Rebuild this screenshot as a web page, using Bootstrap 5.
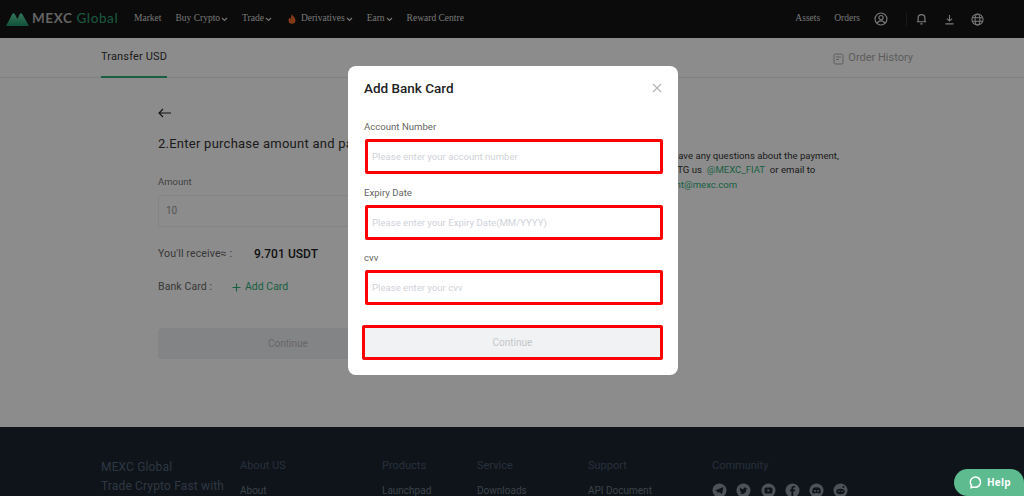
<!DOCTYPE html>
<html lang="en">
<head>
<meta charset="utf-8">
<title>MEXC Global - Add Bank Card</title>
<link href="https://cdn.jsdelivr.net/npm/bootstrap@5.3.0/dist/css/bootstrap.min.css" rel="stylesheet">
<style>
html,body{height:100%;overflow:hidden}
body{font-family:Roboto,"Liberation Sans",sans-serif;background:#fff;color:#333;font-size:11px}
.top-bar{height:38px;background:#141414;padding-left:6px;padding-right:40px;color:#c8c8c8}
.brand-wrap{width:113px}
.brand-txt{font:700 13.5px/1 Lato,Roboto,sans-serif;letter-spacing:.6px;color:#b5b5b5;white-space:nowrap;margin-left:3px}
.brand-txt b{color:#2f9b70;font-weight:500}
.nav-txt{font:9.5px/1 "Liberation Serif",serif;color:#d8d8d8;white-space:nowrap}
.mk-nav{margin-left:15px;gap:14px}
.flame-ico{margin:0 5px 0 2px}
.nav-chev{width:7px;height:5px;margin-left:1px}
.rn-a{margin-left:14px}
.divider-v{width:1px;height:14px;background:#2c2c2c;margin-left:18px}
.rn-bell{margin-left:9px}
.rn-dl{margin-left:17px}
.rn-globe{margin-left:16px}
.tabs-bar{height:40px;border-bottom:1px solid #e9ebee;padding:0 111px 0 101px}
.tab-active{font-size:11px;font-weight:400;letter-spacing:.15px;color:#333;height:40px;line-height:38px;border-bottom:2px solid #2fb07a;margin-bottom:-1px}
.tab-side{font-size:11px;color:#aaa;gap:4px;padding-top:2px}
.page-body{padding:30px 0 0 158px;height:349px}
.left-col{width:260px;flex:none}
.back-arrow{display:block;width:14px;height:10px;margin-bottom:18px}
.step-title{font-size:13px;line-height:16px;color:#333;white-space:nowrap;margin:0 0 24px;letter-spacing:.25px}
.fld-lbl{font-size:9.5px;color:#777;margin:0 0 7px;line-height:12px}
.amount-box{height:32px;border:1px solid #eef0f2;border-radius:4px;padding:0 7px;color:#999;line-height:30px;font-size:10px}
.recv-row{margin-top:19px;height:16px;font-size:10.5px;color:#666;letter-spacing:.15px}
.recv-label{width:96px}
.recv-val{font-size:12px;font-weight:500;color:#222;letter-spacing:.05px}
.card-row{margin-top:17px;height:16px;font-size:10.5px;color:#666}
.card-label{width:74px;letter-spacing:.1px}
.add-card{color:#2fb07a}
.ghost-btn{margin-top:33px;height:31px;border-radius:4px;background:#eff0f2;color:#bbb;font-size:10px;line-height:31px;text-align:center}
.help-col{margin:41px 0 0 229px;width:210px;flex:none;font-size:9.6px;line-height:14.3px;color:#333}
.help-col a{color:#2fb07a;text-decoration:none}
.site-foot{height:69px;background:#1b262f;padding:32px 0 0 101px;overflow:hidden;color:#475670}
.foot-title{font-size:12px;line-height:19px;width:139px;flex:none;letter-spacing:.15px;color:#546379;margin-top:-1px}
.foot-col{flex:none;font-size:11px;line-height:14px}
.foot-col p{margin:0 0 11px}
.foot-col p.foot-link{margin:0;font-size:10px;color:#6e7a88}
.w-about{width:142px}.w-prod{width:95px}.w-serv{width:111px}.w-supp{width:124px}
.social{gap:9.300px;margin-top:-1px}
.social svg{width:15px;height:15px;display:block}
.mask-layer{position:fixed;inset:0;background:rgba(0,0,0,.45);z-index:10}
.bank-modal{position:absolute;left:348px;top:66px;width:330px;height:309px;background:#fff;border-radius:8px;padding:14px 15px 0 16px}
.modal-head{height:16px;margin-bottom:25px}
.modal-ttl{font-size:13.5px;font-weight:500;line-height:16px;color:#222;margin:0}
.x-btn{width:10px;height:10px;border:0;background:none;padding:0;margin-right:1px;display:block}
.x-btn svg{display:block}
.mod-lbl{font-size:9.600px;line-height:12px;color:#666;margin:0 0 6px;display:block}
.mod-group{margin-bottom:12.5px}
.mod-group .form-control{width:298px;margin-left:1px;height:35px;border:3px solid #f00;border-radius:2px;padding:0 4px;font-size:9.600px;box-shadow:none;background:#fff}
.mod-group .form-control::placeholder{color:#cfd3d9;opacity:1}
.mod-go.btn{display:block;width:301px;height:35px;margin:20px 0 0 -2px;border:3px solid #f00;border-radius:2px;background:#f1f2f4;color:#c4c7cb;font-size:10px;padding:0;opacity:1}
.help-pill{position:fixed;right:0;bottom:0;z-index:20;width:70px;height:27px;border-radius:14px 14px 0 14px;background:#5dbb8f;color:#fff;font-size:10px;font-weight:700;font-family:"Open Sans",Roboto,sans-serif;gap:6px;letter-spacing:.2px;padding-left:14px}
</style>
</head>
<body>
<header class="top-bar d-flex align-items-center">
  <div class="brand-wrap d-flex align-items-center">
    <svg width="23" height="14" viewBox="0 0 23 14" class="flex-shrink-0">
      <defs><linearGradient id="lg" x1="0" y1="0" x2="0" y2="1"><stop offset="0" stop-color="#5fd9a6"/><stop offset="1" stop-color="#1f9268"/></linearGradient></defs>
      <path d="M0 14 6 2.500Q7.500 0 9 2.500L11.500 7 13.500 2.500Q15 0 16.500 2.500L23 14z" fill="url(#lg)"/>
    </svg>
    <span class="brand-txt">MEXC <b>Global</b></span>
  </div>
  <nav class="mk-nav d-flex align-items-center">
    <span class="nav-txt">Market</span>
    <span class="nav-txt d-flex align-items-center">Buy Crypto<svg class="nav-chev" viewBox="0 0 7 5"><path d="M1 1l2.500 2.500L6 1" fill="none" stroke="#d8d8d8" stroke-width="1.100"/></svg></span>
    <span class="nav-txt d-flex align-items-center">Trade<svg class="nav-chev" viewBox="0 0 7 5"><path d="M1 1l2.500 2.500L6 1" fill="none" stroke="#d8d8d8" stroke-width="1.100"/></svg></span>
    <span class="nav-txt d-flex align-items-center"><svg width="8" height="10" viewBox="0 0 8 10" class="flame-ico"><path d="M4 0c.5 2 3.500 3.500 3.500 6.300A3.500 3.500 0 0 1 .5 6.300C.5 5 1.200 4.300 1.800 3.500c.2.900.6 1.300 1 1.500C2.800 3.200 3.200 1.500 4 0z" fill="#ef6a2a"/></svg>Derivatives<svg class="nav-chev" viewBox="0 0 7 5"><path d="M1 1l2.500 2.500L6 1" fill="none" stroke="#d8d8d8" stroke-width="1.100"/></svg></span>
    <span class="nav-txt d-flex align-items-center">Earn<svg class="nav-chev" viewBox="0 0 7 5"><path d="M1 1l2.500 2.500L6 1" fill="none" stroke="#d8d8d8" stroke-width="1.100"/></svg></span>
    <span class="nav-txt">Reward Centre</span>
  </nav>
  <div class="d-flex align-items-center ms-auto">
    <span class="nav-txt">Assets</span>
    <span class="nav-txt rn-a">Orders</span>
    <svg class="rn-a" width="14" height="14" viewBox="0 0 15 15" fill="none" stroke="#e0e0e0" stroke-width="1.200"><circle cx="7.500" cy="7.500" r="6.400"/><circle cx="7.500" cy="6" r="2.300"/><path d="M3.300 12.300c.8-2 2.400-2.800 4.200-2.800s3.400.8 4.200 2.800"/></svg>
    <span class="divider-v"></span>
    <svg class="rn-bell" width="11" height="12" viewBox="0 0 12 13" fill="none" stroke="#e0e0e0" stroke-width="1.300"><path d="M2.300 9.500V5.500a3.700 3.700 0 0 1 7.400 0v4zM1 9.500h10M4.700 11.800h2.600"/></svg>
    <svg class="rn-dl" width="11" height="11" viewBox="0 0 12 12" fill="none" stroke="#e0e0e0" stroke-width="1.200"><path d="M6 1v6.500M3.200 5 6 7.700 8.800 5M1.500 10.800h9"/></svg>
    <svg class="rn-globe" width="13" height="13" viewBox="0 0 14 14" fill="none" stroke="#e0e0e0" stroke-width="1.100"><circle cx="7" cy="7" r="6"/><ellipse cx="7" cy="7" rx="2.600" ry="6"/><path d="M1.300 5h11.400M1.300 9h11.400"/></svg>
  </div>
</header>

<div class="tabs-bar d-flex justify-content-between align-items-start">
  <span class="tab-active">Transfer USD</span>
  <span class="tab-side d-flex align-items-center h-100">
    <svg width="11" height="12" viewBox="0 0 11 12" fill="none" stroke="#aaa" stroke-width="1"><rect x="1" y="1" width="9" height="10" rx="1.500"/><path d="M3 4h5M3 6.500h3"/></svg>Order History
  </span>
</div>

<main class="page-body d-flex">
  <section class="left-col">
    <svg class="back-arrow" viewBox="0 0 14 10" fill="none" stroke="#222" stroke-width="1.100"><path d="M13 5H1M5 1 1 5l4 4"/></svg>
    <h2 class="step-title fw-normal">2.Enter purchase amount and payment method</h2>
    <p class="fld-lbl">Amount</p>
    <div class="amount-box">10</div>
    <div class="recv-row d-flex align-items-center"><span class="recv-label">You'll receive≈ :</span><span class="recv-val">9.701 USDT</span></div>
    <div class="card-row d-flex align-items-center"><span class="card-label">Bank Card :</span><span class="add-card d-flex align-items-center"><svg class="me-1" width="9" height="9" viewBox="0 0 9 9" stroke="#2fb07a" stroke-width="1.100"><path d="M4.500 .5v8M.5 4.500h8"/></svg>Add Card</span></div>
    <div class="ghost-btn">Continue</div>
  </section>
  <aside class="help-col">If you have any questions about the payment,<br>please TG us &nbsp;<a href="#">@MEXC_FIAT</a>&nbsp; or email to<br><a href="#">payment@mexc.com</a></aside>
</main>

<footer class="site-foot d-flex">
  <div class="foot-title">MEXC Global<br>Trade Crypto Fast with</div>
  <div class="foot-col w-about"><p>About US</p><p class="foot-link">About</p></div>
  <div class="foot-col w-prod"><p>Products</p><p class="foot-link">Launchpad</p></div>
  <div class="foot-col w-serv"><p>Service</p><p class="foot-link">Downloads</p></div>
  <div class="foot-col w-supp"><p>Support</p><p class="foot-link">API Document</p></div>
  <div class="foot-col"><p>Community</p>
    <div class="social d-flex">
      <svg viewBox="0 0 15 15"><circle cx="7.500" cy="7.500" r="7" fill="#8a95a3"/><path d="M3 7.500 11.500 4 10 11 7 9 5.500 10.500V8.500z" fill="#1b262f"/></svg>
      <svg viewBox="0 0 15 15"><circle cx="7.500" cy="7.500" r="7" fill="#8a95a3"/><path d="M3.500 10.500c3.500 1.500 7-.5 7-4.500l1-1-1.200.2C9.500 3.800 7.200 4.500 7.500 6.200 6 6.200 5 5.500 4 4.500c-.5 1 0 2 .5 2.500l-.7-.2c0 .9.600 1.500 1.400 1.800h-.8c.2.700.8 1 1.500 1.100-.7.500-1.500.6-2.400.8z" fill="#1b262f"/></svg>
      <svg viewBox="0 0 15 15"><circle cx="7.500" cy="7.500" r="7" fill="#8a95a3"/><rect x="3.500" y="4.500" width="8" height="6" rx="1.500" fill="#1b262f"/><path d="M6.500 6v3l2.500-1.500z" fill="#8a95a3"/></svg>
      <svg viewBox="0 0 15 15"><circle cx="7.500" cy="7.500" r="7" fill="#8a95a3"/><path d="M8.300 13V8.300H10l.2-1.800H8.300V5.400c0-.5.200-.8.900-.8h1V3c-.4 0-.9-.1-1.400-.1-1.500 0-2.400.9-2.400 2.400v1.200H5v1.800h1.400V13z" fill="#1b262f"/></svg>
      <svg viewBox="0 0 15 15"><circle cx="7.500" cy="7.500" r="7" fill="#8a95a3"/><path d="M4 5q3.500-1.500 7 0l1 4.500q-1 1-2.500 1.200L9 10H6l-.5.700Q4 10.500 3 9.500z" fill="#1b262f"/><circle cx="6" cy="8" r=".9" fill="#8a95a3"/><circle cx="9" cy="8" r=".9" fill="#8a95a3"/></svg>
      <svg viewBox="0 0 15 15"><circle cx="7.500" cy="7.500" r="7" fill="#8a95a3"/><ellipse cx="7.500" cy="8.500" rx="4.200" ry="2.800" fill="#1b262f"/><circle cx="6" cy="8.200" r=".8" fill="#8a95a3"/><circle cx="9" cy="8.200" r=".8" fill="#8a95a3"/><circle cx="10.500" cy="4" r="1" fill="#1b262f"/></svg>
    </div>
  </div>
</footer>

<div class="mask-layer">
  <form class="bank-modal">
    <div class="modal-head d-flex justify-content-between align-items-center">
      <h5 class="modal-ttl">Add Bank Card</h5>
      <button type="button" class="x-btn" aria-label="Close"><svg width="10" height="10" viewBox="0 0 10 10" stroke="#b4b4b4" stroke-width="1.100"><path d="M1 1l8 8M9 1l-8 8"/></svg></button>
    </div>
    <div class="mod-group"><label class="mod-lbl">Account Number</label><input class="form-control" placeholder="Please enter your account number"></div>
    <div class="mod-group"><label class="mod-lbl">Expiry Date</label><input class="form-control" placeholder="Please enter your Expiry Date(MM/YYYY)"></div>
    <div class="mod-group"><label class="mod-lbl">cvv</label><input class="form-control" placeholder="Please enter your cvv"></div>
    <button type="button" class="btn mod-go" disabled>Continue</button>
  </form>
</div>

<div class="help-pill d-flex align-items-center">
  <svg width="13" height="13" viewBox="0 0 14 14" fill="none" stroke="#fff" stroke-width="1.600"><path d="M3.200 12.600 3.700 10A5.500 5.500 0 1 1 7 12a6 6 0 0 1-1.500-.2z"/></svg>Help
</div>
<script src="https://cdn.jsdelivr.net/npm/bootstrap@5.3.0/dist/js/bootstrap.bundle.min.js"></script>
</body>
</html>
